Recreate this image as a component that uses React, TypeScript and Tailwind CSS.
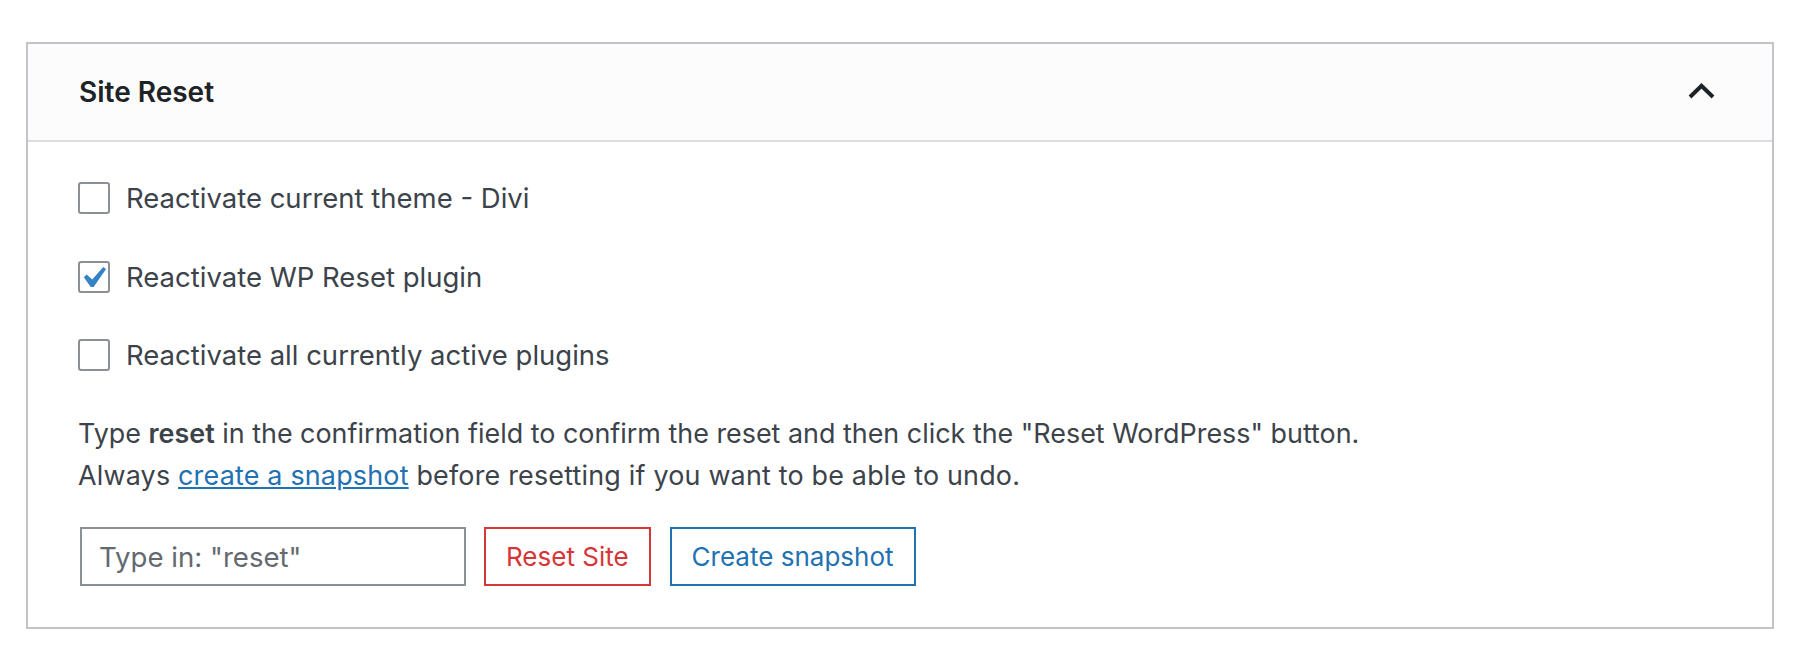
import React from "react";

function Checkbox({ checked }: { checked?: boolean }) {
  return (
    <span className="relative block w-[32px] h-[32px] shrink-0 border-2 border-[#8c8f94] rounded-[3px] bg-white">
      {checked && (
        <svg
          className="absolute left-[3px] top-[3px]"
          width="24"
          height="22"
          viewBox="5.4 4.6 11.2 10"
        >
          <path d="M14.83 4.89l1.34.94-5.81 8.38H9.02L5.78 9.67l1.34-1.25 2.57 2.4z" fill="#3582c4" />
        </svg>
      )}
    </span>
  );
}

function Row({ label, checked }: { label: string; checked?: boolean }) {
  return (
    <label className="flex items-center gap-[16px] h-[32px]">
      <Checkbox checked={checked} />
      <span className="text-[27.5px] leading-[32px] text-[#3c434a]">{label}</span>
    </label>
  );
}

export default function App() {
  return (
    <div
      className="min-h-[667px] bg-white pt-[42px] pl-[26px]"
      style={{ fontFamily: "Inter, 'Liberation Sans', sans-serif" }}
    >
      <div className="w-[1748px] border-2 border-[#c3c4c7] bg-white">
        <div className="h-[98px] bg-[#fcfcfc] border-b-2 border-[#dcdcde] flex items-center justify-between pl-[51px] pr-[57px]">
          <h2 className="text-[28px] font-semibold text-[#1d2327]">Site Reset</h2>
          <svg width="27" height="16" viewBox="0 0 27 16" className="mt-[-2px]">
            <polyline points="2,14 13.5,2.8 25,14" fill="none" stroke="#1d2327" strokeWidth="4" />
          </svg>
        </div>
        <div className="pl-[50px] pt-[40px] pb-[41px]">
          <div className="flex flex-col gap-[46.5px]">
            <Row label="Reactivate current theme - Divi" />
            <Row label="Reactivate WP Reset plugin" checked />
            <Row label="Reactivate all currently active plugins" />
          </div>
          <div className="mt-[41px] text-[26.9px] leading-[42px] text-[#3c434a]">
            <p>
              Type <strong className="font-semibold">reset</strong> in the confirmation field to confirm the reset and then click the "Reset WordPress" button.
            </p>
            <p className="tracking-[0.2px]">
              Always{" "}
              <a href="#" className="text-[#2271b1] underline">
                create a snapshot
              </a>{" "}
              before resetting if you want to be able to undo.
            </p>
          </div>
          <div className="mt-[31px] ml-[2px] flex items-center gap-[18px]">
            <input
              type="text"
              placeholder={'Type in: "reset"'}
              className="w-[386px] h-[59px] border-2 border-[#8c8f94] px-[17px] text-[27.6px] text-[#2c3338] placeholder:text-[#646970] bg-white outline-none"
            />
            <button className="h-[59px] px-[20px] border-2 border-[#d63638] text-[#d63638] text-[26px] bg-white">
              Reset Site
            </button>
            <button className="h-[59px] px-[20px] border-2 border-[#2271b1] text-[#2271b1] text-[26px] bg-white ml-[1px]">
              Create snapshot
            </button>
          </div>
        </div>
      </div>
    </div>
  );
}
